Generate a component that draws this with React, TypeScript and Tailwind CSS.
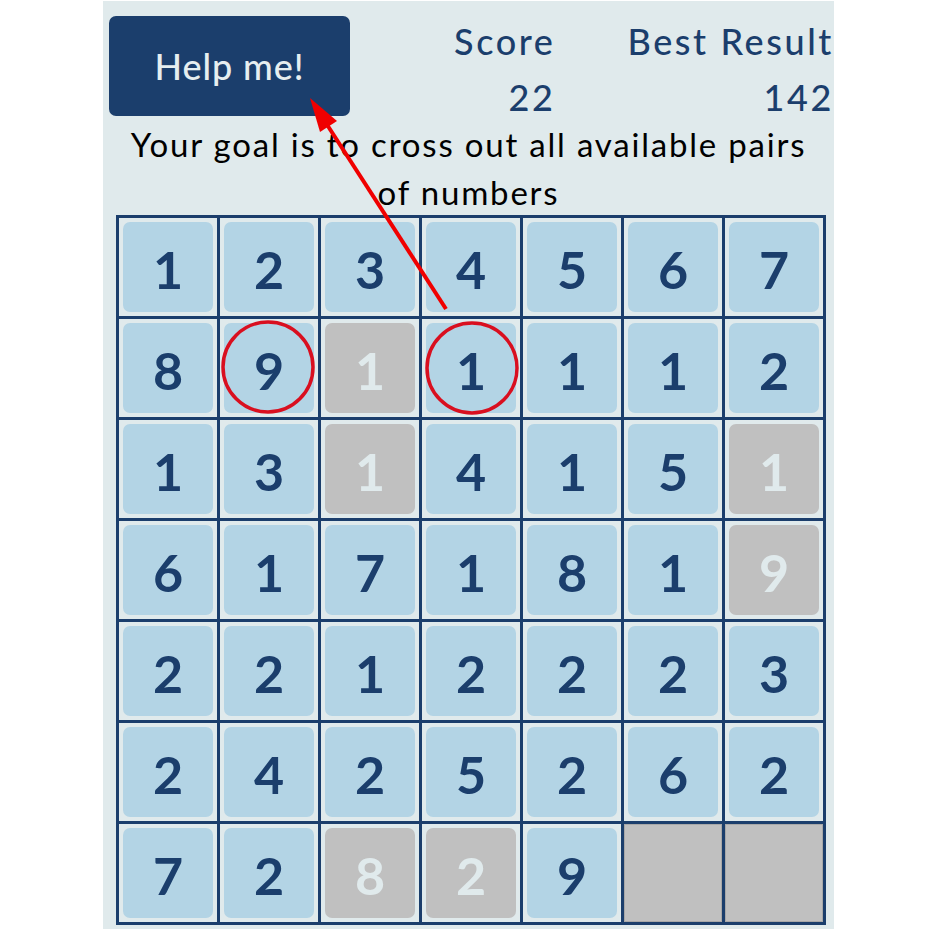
import React from "react";

type Cell = { n?: number; off?: boolean };

const rows: Cell[][] = [
  [{ n: 1 }, { n: 2 }, { n: 3 }, { n: 4 }, { n: 5 }, { n: 6 }, { n: 7 }],
  [{ n: 8 }, { n: 9 }, { n: 1, off: true }, { n: 1 }, { n: 1 }, { n: 1 }, { n: 2 }],
  [{ n: 1 }, { n: 3 }, { n: 1, off: true }, { n: 4 }, { n: 1 }, { n: 5 }, { n: 1, off: true }],
  [{ n: 6 }, { n: 1 }, { n: 7 }, { n: 1 }, { n: 8 }, { n: 1 }, { n: 9, off: true }],
  [{ n: 2 }, { n: 2 }, { n: 1 }, { n: 2 }, { n: 2 }, { n: 2 }, { n: 3 }],
  [{ n: 2 }, { n: 4 }, { n: 2 }, { n: 5 }, { n: 2 }, { n: 6 }, { n: 2 }],
  [{ n: 7 }, { n: 2 }, { n: 8, off: true }, { n: 2, off: true }, { n: 9 }, { off: true }, { off: true }],
];

const font = { fontFamily: "Lato, 'Open Sans', sans-serif" };

function NumberCell({ cell }: { cell: Cell }) {
  if (cell.n === undefined) {
    return <div className="h-[98px] w-[98px] border border-[#a8a8a8] bg-[#c0c0c0]" />;
  }
  return (
    <div className="h-[98px] w-[98px] bg-[#e0eaec] p-[4px]">
      <div
        className={
          cell.off
            ? "flex h-full w-full items-center justify-center rounded-[7px] bg-[#c0c0c0] pt-[3px] text-[52px] font-bold text-[#e0eaec]"
            : "flex h-full w-full items-center justify-center rounded-[7px] bg-[#b3d4e5] pt-[3px] text-[52px] font-bold text-[#1b3e6c]"
        }
      >
        {cell.n}
      </div>
    </div>
  );
}

export default function App() {
  return (
    <div className="relative h-[932px] w-[932px] bg-white" style={font}>
      <div className="ml-[103px] mt-[1px] flex h-[928px] w-[731px] flex-col bg-[#e0eaec] pt-[15px]">
        <div className="flex h-[100px] items-start">
          <button className="ml-[6px] flex h-[100px] w-[241px] items-center justify-center rounded-[7px] bg-[#1b3e6c] text-[36px] font-medium tracking-wide text-[#e6eef0]">
            Help me!
          </button>
          <div className="ml-auto flex gap-[72px] text-[36px] font-medium tracking-[2.6px] text-[#1b3e6c]">
            <div className="flex flex-col items-end gap-[6px] leading-[50px]">
              <span>Score</span>
              <span>22</span>
            </div>
            <div className="flex flex-col items-end gap-[6px] leading-[50px]">
              <span>Best Result</span>
              <span>142</span>
            </div>
          </div>
        </div>
        <div className="mt-[4px] flex h-[95px] flex-col items-center text-[33px] leading-[48px] tracking-[1.8px] text-black">
          <span>Your goal is to cross out all available pairs</span>
          <span>of numbers</span>
        </div>
        <div className="ml-[13px] grid w-[710px] grid-cols-7 gap-[3px] bg-[#1b3e6c] p-[3px]">
          {rows.flat().map((c, i) => (
            <NumberCell key={i} cell={c} />
          ))}
        </div>
      </div>

      <svg className="pointer-events-none absolute inset-0" width="932" height="932">
        <circle cx="268" cy="366" r="45" fill="none" stroke="#d90f1f" strokeWidth="3.5" />
        <circle cx="472" cy="367" r="45" fill="none" stroke="#d90f1f" strokeWidth="3.5" />
        <line x1="446" y1="308" x2="324" y2="119" stroke="#f00000" strokeWidth="4" />
        <polygon points="310,97 337,120 320,131" fill="#f00000" />
      </svg>
    </div>
  );
}
